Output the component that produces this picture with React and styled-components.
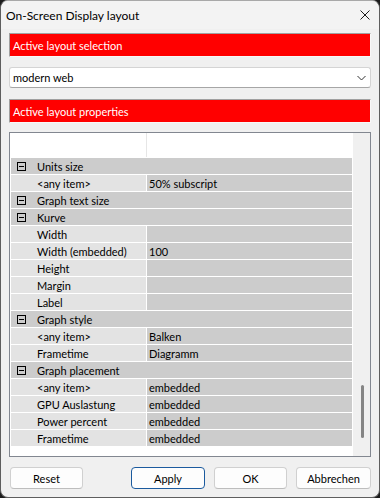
import React from 'react';
import styled, { createGlobalStyle } from 'styled-components';

const Global = createGlobalStyle`
  html, body { margin: 0; padding: 0; background: #1c1c1c; }
  body { font-family: "Lato", "Segoe UI", "Noto Sans", sans-serif; }
  #root { width: 380px; height: 498px; }
  * { box-sizing: border-box; }
`;

const Window = styled.div`
  width: 380px;
  height: 498px;
  background: #f0f0f0;
  border: 1px solid #5e5e5e;
  border-top-color: #a8a8a8;
  border-radius: 8px;
  overflow: hidden;
  display: flex;
  flex-direction: column;
  font-size: 11px;
  color: #000;
`;

const TitleBar = styled.div`
  height: 28px;
  display: flex;
  align-items: center;
  justify-content: space-between;
  padding: 0 9px 0 5px;
  background: #f3f3f3;
`;

const Title = styled.span`
  font-size: 12px;
  color: #000;
`;

const CloseIcon = styled.svg`
  width: 10px;
  height: 10px;
  display: block;
`;

const Content = styled.div`
  flex: 1;
  display: flex;
  flex-direction: column;
  padding: 4px 8px 0 8px;
`;

const SectionBar = styled.div`
  height: 24px;
  background: #ff0000;
  color: #fff;
  display: flex;
  align-items: center;
  padding-left: 3px;
  border-top: 1px solid #a0a0a0;
  border-left: 1px solid #a0a0a0;
  border-bottom: 1px solid #f8f8f8;
  border-right: 1px solid #f8f8f8;
  margin-bottom: ${p => p.$gap}px;
`;

const Dropdown = styled.div`
  height: 21px;
  background: #fff;
  border: 1px solid #d4d4d4;
  border-bottom-color: #a6a6a6;
  border-radius: 3px;
  display: flex;
  align-items: center;
  justify-content: space-between;
  padding: 0 4px 0 3px;
  margin-bottom: 11px;
`;

const Chevron = styled.svg`
  width: 9px;
  height: 6px;
  display: block;
`;

const Grid = styled.div`
  height: 325px;
  border: 1px solid #828790;
  background: #fff;
  display: flex;
`;

const GridBody = styled.div`
  width: 343px;
  display: flex;
  flex-direction: column;
  padding: 0 1px;
  gap: 1px;
`;

const HeaderRow = styled.div`
  height: 24px;
  display: grid;
  grid-template-columns: 135px 1px 1fr;
`;

const HeaderDivider = styled.div`
  background: #e6e6e6;
`;

const CategoryRow = styled.div`
  height: 16px;
  background: #cccccc;
  display: flex;
  align-items: center;
  padding-left: 6px;
  white-space: nowrap;
`;

const ToggleBox = styled.span`
  width: 9px;
  height: 9px;
  border: 1px solid #000;
  position: relative;
  margin-right: 11px;
  flex: none;
  &::after {
    content: '';
    position: absolute;
    left: 1px;
    right: 1px;
    top: 3px;
    height: 1px;
    background: #000;
  }
`;

const ItemRow = styled.div`
  height: 16px;
  display: grid;
  grid-template-columns: 135px 205px;
  gap: 1px;
`;

const NameCell = styled.div`
  background: #e3e3e3;
  padding-left: 26px;
  display: flex;
  align-items: center;
  white-space: nowrap;
  overflow: hidden;
`;

const ValueCell = styled.div`
  background: #cccccc;
  padding-left: 2px;
  display: flex;
  align-items: center;
  white-space: nowrap;
  overflow: hidden;
`;

const ScrollTrack = styled.div`
  width: 17px;
  background: #f0f0f0;
  position: relative;
`;

const ScrollThumb = styled.div`
  position: absolute;
  left: 8px;
  top: 252px;
  width: 3px;
  height: 53px;
  border-radius: 2px;
  background: #858585;
`;

const ButtonRow = styled.div`
  display: flex;
  gap: 9px;
  margin-top: 10px;
  padding: 0 0 0 1px;
`;

const Spacer = styled.div`
  flex: 1;
`;

const Button = styled.button`
  width: ${p => p.$w || 74}px;
  height: 22px;
  font-family: inherit;
  font-size: 11px;
  color: #000;
  background: #fdfdfd;
  border: 1px solid ${p => (p.$default ? '#1b5a9e' : '#d0d0d0')};
  border-bottom-color: ${p => (p.$default ? '#1b5a9e' : '#bdbdbd')};
  border-radius: 4px;
  padding: 0;
  display: flex;
  align-items: center;
  justify-content: center;
`;

const rows = [
  { cat: 'Units size' },
  { name: '<any item>', value: '50% subscript' },
  { cat: 'Graph text size' },
  { cat: 'Kurve' },
  { name: 'Width', value: '' },
  { name: 'Width (embedded)', value: '100' },
  { name: 'Height', value: '' },
  { name: 'Margin', value: '' },
  { name: 'Label', value: '' },
  { cat: 'Graph style' },
  { name: '<any item>', value: 'Balken' },
  { name: 'Frametime', value: 'Diagramm' },
  { cat: 'Graph placement' },
  { name: '<any item>', value: 'embedded' },
  { name: 'GPU Auslastung', value: 'embedded' },
  { name: 'Power percent', value: 'embedded' },
  { name: 'Frametime', value: 'embedded' },
];

export default function App() {
  return (
    <>
      <Global />
      <Window>
        <TitleBar>
          <Title>On-Screen Display layout</Title>
          <CloseIcon viewBox="0 0 10 10">
            <path d="M0.5 0.5 L9.5 9.5 M9.5 0.5 L0.5 9.5" stroke="#1a1a1a" strokeWidth="1" />
          </CloseIcon>
        </TitleBar>
        <Content>
          <SectionBar $gap={10}>Active layout selection</SectionBar>
          <Dropdown>
            <span>modern web</span>
            <Chevron viewBox="0 0 9 6">
              <path d="M0.5 1 L4.5 5 L8.5 1" fill="none" stroke="#333" strokeWidth="1" />
            </Chevron>
          </Dropdown>
          <SectionBar $gap={9}>Active layout properties</SectionBar>
          <Grid>
            <GridBody>
              <HeaderRow>
                <div />
                <HeaderDivider />
                <div />
              </HeaderRow>
              {rows.map((r, i) =>
                r.cat ? (
                  <CategoryRow key={i}>
                    <ToggleBox />
                    {r.cat}
                  </CategoryRow>
                ) : (
                  <ItemRow key={i}>
                    <NameCell>{r.name}</NameCell>
                    <ValueCell>{r.value}</ValueCell>
                  </ItemRow>
                )
              )}
            </GridBody>
            <ScrollTrack>
              <ScrollThumb />
            </ScrollTrack>
          </Grid>
          <ButtonRow>
            <Button $w={73}>Reset</Button>
            <Spacer />
            <Button $default>Apply</Button>
            <Button $w={73}>OK</Button>
            <Button $w={75}>Abbrechen</Button>
          </ButtonRow>
        </Content>
      </Window>
    </>
  );
}
